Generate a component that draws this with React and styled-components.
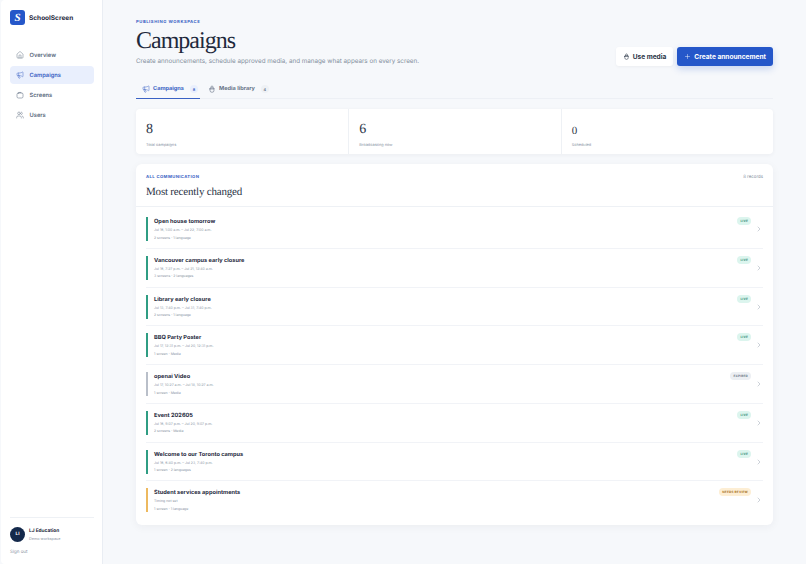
import React from "react";
import styled, { createGlobalStyle } from "styled-components";
import { House, Megaphone, Users, Plus, ChevronRight } from "lucide-react";

const GlobalStyle = createGlobalStyle`
  html, body { margin: 0; padding: 0; background: #f6f8fb; }
  body {
    font-family: Inter, "Liberation Sans", sans-serif;
    color: #1d2939;
    text-rendering: geometricPrecision;
  }
  * { box-sizing: border-box; }
`;

const Shell = styled.div`
  display: flex;
  width: 806px;
  height: 564px;
  overflow: hidden;
`;

const Sidebar = styled.aside`
  width: 102px;
  margin-left: 1px;
  flex: none;
  background: #fff;
  border-right: 1px solid #e9edf3;
  border-radius: 4px 0 0 4px;
  padding: 10px 8px 9px 9px;
  display: flex;
  flex-direction: column;
`;

const Brand = styled.div`
  display: flex;
  align-items: center;
  gap: 4px;
  font-size: 6.5px;
  font-weight: 700;
  color: #1f2a3d;
`;

const Logo = styled.div`
  width: 15px;
  height: 15px;
  border-radius: 3px;
  background: #2557c9;
  color: #fff;
  display: flex;
  align-items: center;
  justify-content: center;
  font-family: "Liberation Serif", serif;
  font-style: italic;
  font-weight: 700;
  font-size: 11px;
`;

const Nav = styled.nav`
  margin-top: 21px;
  display: flex;
  flex-direction: column;
  gap: 2px;
`;

const NavItem = styled.div`
  height: 18px;
  border-radius: 4px;
  padding-left: 6px;
  display: flex;
  align-items: center;
  gap: 5.5px;
  font-size: 5.75px;
  font-weight: 600;
  color: ${(p) => (p.$active ? "#3a62c4" : "#5d6b80")};
  background: ${(p) => (p.$active ? "#e9effd" : "transparent")};
`;

const SideFoot = styled.div`
  margin-top: auto;
  border-top: 1px solid #eef1f5;
  padding-top: 9px;
`;

const Account = styled.div`
  display: flex;
  align-items: center;
  gap: 4px;
`;

const Avatar = styled.div`
  width: 15px;
  height: 15px;
  border-radius: 50%;
  background: #14294b;
  color: #fff;
  font-size: 4.5px;
  font-weight: 700;
  display: flex;
  align-items: center;
  justify-content: center;
`;

const AccountName = styled.div`
  font-size: 4.8px;
  font-weight: 700;
  line-height: 7px;
  color: #1f2a3d;
`;

const AccountSub = styled.div`
  font-size: 3.8px;
  line-height: 7px;
  color: #8a95a5;
`;

const SignOut = styled.div`
  margin-top: 8px;
  font-size: 4.5px;
  color: #8a95a5;
`;

const Main = styled.main`
  flex: 1;
  min-width: 0;
  padding: 20px 33px 0 33px;
`;

const Header = styled.header`
  display: flex;
  justify-content: space-between;
  align-items: flex-end;
`;

const Eyebrow = styled.div`
  font-size: 4.2px;
  line-height: 6px;
  font-weight: 700;
  letter-spacing: 0.55px;
  color: #3a62c4;
`;

const Title = styled.h1`
  margin: 0;
  font-family: "Liberation Serif", serif;
  font-weight: 400;
  font-size: 24px;
  line-height: 30px;
  letter-spacing: -1px;
  color: #1f2a3d;
`;

const Subtitle = styled.p`
  margin: 0;
  font-size: 6.29px;
  line-height: 10px;
  color: #8590a0;
`;

const Actions = styled.div`
  display: flex;
  gap: 4px;
`;

const Button = styled.button`
  height: 19px;
  border: 0;
  border-radius: 3px;
  padding: 0 7px;
  display: flex;
  align-items: center;
  gap: 3px;
  font-family: inherit;
  font-size: 6.6px;
  font-weight: 700;
  color: ${(p) => (p.$primary ? "#fff" : "#2b3547")};
  background: ${(p) => (p.$primary ? "#2557c9" : "#fff")};
  box-shadow: ${(p) =>
    p.$primary ? "0 3px 7px rgba(37,87,201,.22)" : "0 1px 3px rgba(30,40,60,.05)"};
`;

const Tabs = styled.div`
  margin-top: 13px;
  display: flex;
  border-bottom: 1px solid #edf0f5;
  height: 20px;
`;

const Tab = styled.div`
  height: 20px;
  padding: 1px 7px 0 ${(p) => (p.$active ? "6px" : "7px")};
  margin-right: ${(p) => (p.$active ? "1px" : "0")};
  width: ${(p) => (p.$active ? "64px" : "auto")};
  display: flex;
  align-items: center;
  gap: 3px;
  font-size: 5.6px;
  font-weight: 700;
  color: ${(p) => (p.$active ? "#3a62c4" : "#687488")};
  border-bottom: 1px solid ${(p) => (p.$active ? "#3a62c4" : "transparent")};
  svg { flex: none; }
`;

const TabCount = styled.span`
  width: 8px;
  height: 8px;
  flex: none;
  margin-left: 3px;
  border-radius: 50%;
  background: ${(p) => (p.$active ? "#e9effd" : "#eef1f5")};
  font-size: 3.8px;
  display: flex;
  align-items: center;
  justify-content: center;
`;

const Stats = styled.section`
  margin-top: 10px;
  height: 45px;
  display: grid;
  grid-template-columns: repeat(3, 1fr);
  background: #fff;
  border-radius: 4px;
  box-shadow: 0 1px 4px rgba(30, 40, 60, 0.05);
`;

const Stat = styled.div`
  padding: 13px 10px 0 10px;
  border-left: ${(p) => (p.$first ? "0" : "1px solid #eef1f5")};
`;

/* the zero sits on the x-height in the design, so it gets a smaller size */
const StatValue = styled.div`
  height: 16px;
  padding-top: ${(p) => (p.$low ? "1px" : "0")};
  font-family: "Liberation Serif", serif;
  font-size: ${(p) => (p.$low ? "11px" : "14px")};
  line-height: 16px;
  color: #2b3547;
`;

const StatLabel = styled.div`
  margin-top: 3px;
  font-size: 3.9px;
  line-height: 7px;
  color: #8a95a5;
`;

const Panel = styled.section`
  margin-top: 10px;
  background: #fff;
  border-radius: 6px;
  box-shadow: 0 2px 8px rgba(30, 40, 60, 0.05);
  padding-bottom: 6px;
`;

const PanelHead = styled.div`
  height: 43px;
  padding: 11px 10px 0;
  border-bottom: 1px solid #eef1f5;
  display: flex;
  justify-content: space-between;
`;

const PanelEyebrow = styled(Eyebrow)`
  line-height: 5px;
  letter-spacing: 0.4px;
`;

const PanelTitle = styled.h2`
  margin: 5px 0 0;
  font-family: "Liberation Serif", serif;
  font-weight: 400;
  font-size: 11px;
  line-height: 14px;
  letter-spacing: -0.2px;
  color: #2b3547;
`;

const Records = styled.div`
  font-size: 4.4px;
  line-height: 5px;
  color: #8a95a5;
`;

const RowList = styled.div`
  padding-top: 2px;
`;

const Row = styled.div`
  height: 38.75px;
  margin: 0 10px;
  padding-top: ${(p) => (p.$first ? "8px" : "7px")};
  display: flex;
  align-items: flex-start;
  border-top: ${(p) => (p.$first ? "0" : "1px solid #f1f3f7")};
`;

const Bar = styled.div`
  width: 2px;
  height: 24px;
  background: ${(p) => p.$color};
  flex: none;
`;

const RowBody = styled.div`
  margin-left: 6px;
  padding-top: 1px;
  flex: 1;
  min-width: 0;
`;

const RowTitle = styled.div`
  font-size: 5.65px;
  font-weight: 700;
  line-height: 9px;
  color: #1f2a3d;
`;

const RowMeta = styled.div`
  font-size: 3.5px;
  line-height: 7.5px;
  color: #8a95a5;
`;

const Badge = styled.span`
  height: 8px;
  margin-right: 13px;
  padding: 0 3px;
  border-radius: 4px;
  font-size: 3.1px;
  line-height: 8px;
  font-weight: 700;
  letter-spacing: 0.2px;
  color: ${(p) => p.$fg};
  background: ${(p) => p.$bg};
`;

const Chevron = styled(ChevronRight)`
  flex: none;
  color: #8a95a5;
  margin-left: -9px;
  margin-top: 8px;
`;

const ScreenIcon = (p) => (
  <svg width={p.size} height={p.size} viewBox="0 0 24 24" fill="none" stroke="currentColor" strokeWidth="1.6" strokeLinecap="round" strokeLinejoin="round">
    <rect x="3" y="6" width="18" height="15" rx="4" />
    <path d="M7 6 C8 3 16 3 17 6" />
  </svg>
);

const MediaIcon = (p) => (
  <svg width={p.size} height={p.size} viewBox="0 0 24 24" fill="none" stroke="currentColor" strokeWidth="1.8" strokeLinecap="round" strokeLinejoin="round">
    <path d="M6 11v5a6 6 0 0 0 12 0v-5" />
    <path d="M6 11a2 2 0 0 1 2-2h8a2 2 0 0 1 2 2v1H6z" />
    <path d="M9 9V6a3 3 0 0 1 6 0v3" />
  </svg>
);

const tones = {
  live: { bar: "#2f9d83", fg: "#2f8a72", bg: "#dcf5ee", text: "LIVE" },
  expired: { bar: "#b9bfc9", fg: "#6f7a8a", bg: "#eceff3", text: "EXPIRED" },
  review: { bar: "#edb95f", fg: "#a8701e", bg: "#fdeed4", text: "NEEDS REVIEW" },
};

const campaigns = [
  { title: "Open house tomorrow", time: "Jul 16, 1:00 a.m. – Jul 22, 7:00 a.m.", meta: "2 screens · 1 language", tone: "live" },
  { title: "Vancouver campus early closure", time: "Jul 16, 7:27 p.m. – Jul 21, 12:40 a.m.", meta: "3 screens · 2 languages", tone: "live" },
  { title: "Library early closure", time: "Jul 13, 7:40 p.m. – Jul 31, 7:40 p.m.", meta: "2 screens · 1 language", tone: "live" },
  { title: "BBQ Party Poster", time: "Jul 17, 12:31 p.m. – Jul 20, 12:31 p.m.", meta: "1 screen · Media", tone: "live" },
  { title: "openai Video", time: "Jul 17, 10:27 a.m. – Jul 18, 10:27 a.m.", meta: "1 screen · Media", tone: "expired" },
  { title: "Event 202605", time: "Jul 16, 9:07 p.m. – Jul 20, 9:07 p.m.", meta: "2 screens · Media", tone: "live" },
  { title: "Welcome to our Toronto campus", time: "Jul 16, 6:40 p.m. – Jul 23, 7:40 p.m.", meta: "1 screen · 2 languages", tone: "live" },
  { title: "Student services appointments", time: "Timing not set", meta: "1 screen · 1 language", tone: "review" },
];

export default function App() {
  return (
    <Shell>
      <GlobalStyle />
      <Sidebar>
        <Brand>
          <Logo>S</Logo>
          SchoolScreen
        </Brand>
        <Nav>
          <NavItem><House size={8} strokeWidth={1.4} />Overview</NavItem>
          <NavItem $active><Megaphone size={8} strokeWidth={1.4} />Campaigns</NavItem>
          <NavItem><ScreenIcon size={8} />Screens</NavItem>
          <NavItem><Users size={8} strokeWidth={1.4} />Users</NavItem>
        </Nav>
        <SideFoot>
          <Account>
            <Avatar>LI</Avatar>
            <div>
              <AccountName>LJ Education</AccountName>
              <AccountSub>Demo workspace</AccountSub>
            </div>
          </Account>
          <SignOut>Sign out</SignOut>
        </SideFoot>
      </Sidebar>
      <Main>
        <Header>
          <div>
            <Eyebrow>PUBLISHING WORKSPACE</Eyebrow>
            <Title>Campaigns</Title>
            <Subtitle>Create announcements, schedule approved media, and manage what appears on every screen.</Subtitle>
          </div>
          <Actions>
            <Button><MediaIcon size={7} />Use media</Button>
            <Button $primary><Plus size={7} strokeWidth={1.5} />Create announcement</Button>
          </Actions>
        </Header>
        <Tabs>
          <Tab $active><Megaphone size={8} strokeWidth={1.5} />Campaigns<TabCount $active>8</TabCount></Tab>
          <Tab><MediaIcon size={8} />Media library<TabCount>4</TabCount></Tab>
        </Tabs>
        <Stats>
          <Stat $first><StatValue>8</StatValue><StatLabel>Total campaigns</StatLabel></Stat>
          <Stat><StatValue>6</StatValue><StatLabel>Broadcasting now</StatLabel></Stat>
          <Stat><StatValue $low>0</StatValue><StatLabel>Scheduled</StatLabel></Stat>
        </Stats>
        <Panel>
          <PanelHead>
            <div>
              <PanelEyebrow>ALL COMMUNICATION</PanelEyebrow>
              <PanelTitle>Most recently changed</PanelTitle>
            </div>
            <Records>8 records</Records>
          </PanelHead>
          <RowList>
            {campaigns.map((c, i) => {
              const tone = tones[c.tone];
              return (
                <Row key={c.title} $first={i === 0}>
                  <Bar $color={tone.bar} />
                  <RowBody>
                    <RowTitle>{c.title}</RowTitle>
                    <RowMeta>{c.time}</RowMeta>
                    <RowMeta>{c.meta}</RowMeta>
                  </RowBody>
                  <Badge $fg={tone.fg} $bg={tone.bg}>{tone.text}</Badge>
                  <Chevron size={8} strokeWidth={1.3} />
                </Row>
              );
            })}
          </RowList>
        </Panel>
      </Main>
    </Shell>
  );
}
